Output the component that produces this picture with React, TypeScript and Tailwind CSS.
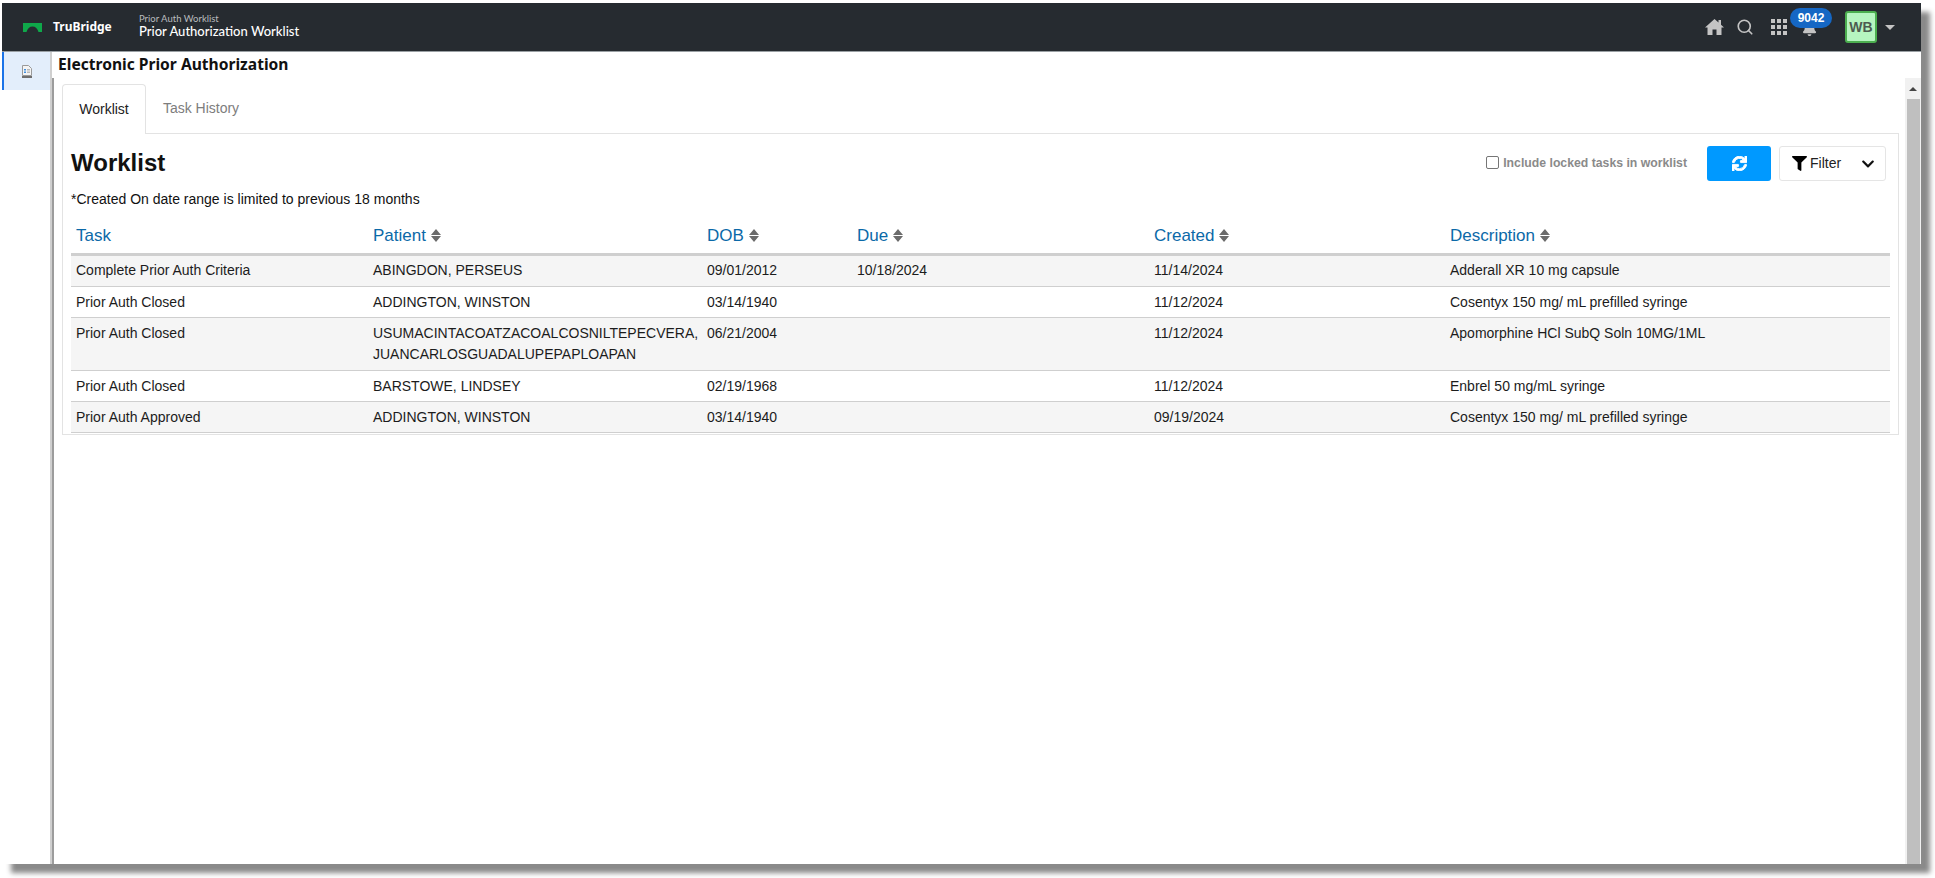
import { FaBell, FaChevronDown, FaFilter, FaSync } from 'react-icons/fa';
import { Search } from 'lucide-react';

const columns = [
  { label: 'Task', width: 'w-[297px]', sortable: false },
  { label: 'Patient', width: 'w-[334px]', sortable: true },
  { label: 'DOB', width: 'w-[150px]', sortable: true },
  { label: 'Due', width: 'w-[297px]', sortable: true },
  { label: 'Created', width: 'w-[296px]', sortable: true },
  { label: 'Description', width: 'w-[445px]', sortable: true },
];

const rows = [
  { task: 'Complete Prior Auth Criteria', patient: ['ABINGDON, PERSEUS'], dob: '09/01/2012', due: '10/18/2024', created: '11/14/2024', description: 'Adderall XR 10 mg capsule' },
  { task: 'Prior Auth Closed', patient: ['ADDINGTON, WINSTON'], dob: '03/14/1940', due: '', created: '11/12/2024', description: 'Cosentyx 150 mg/ mL prefilled syringe' },
  { task: 'Prior Auth Closed', patient: ['USUMACINTACOATZACOALCOSNILTEPECVERA,', 'JUANCARLOSGUADALUPEPAPLOAPAN'], dob: '06/21/2004', due: '', created: '11/12/2024', description: 'Apomorphine HCl SubQ Soln 10MG/1ML' },
  { task: 'Prior Auth Closed', patient: ['BARSTOWE, LINDSEY'], dob: '02/19/1968', due: '', created: '11/12/2024', description: 'Enbrel 50 mg/mL syringe' },
  { task: 'Prior Auth Approved', patient: ['ADDINGTON, WINSTON'], dob: '03/14/1940', due: '', created: '09/19/2024', description: 'Cosentyx 150 mg/ mL prefilled syringe' },
];

function SortIcon() {
  return (
    <svg viewBox="0 0 10 13" className="ml-[5px] inline-block h-[13px] w-[10px] align-[-1px]">
      <path d="M5 0 L10 6 H0 Z M0 7 H10 L5 13 Z" fill="#6b6b6b" />
    </svg>
  );
}

function Logo() {
  return (
    <svg viewBox="0 0 19 9" className="h-[9px] w-[19px]">
      <path d="M0 0 H19 V9 H15.5 C14.5 5.5 12.5 3.5 9.5 3.5 C6.5 3.5 4.5 5.5 3.5 9 H0 Z" fill="#0fa84a" />
    </svg>
  );
}

function HomeIcon() {
  return (
    <svg viewBox="0 0 19 16" className="h-[16px] w-[19px]" fill="#c4c4c4">
      <path d="M9.5 0 L13.5 3.6 V1 H16 V5.8 L19 8.5 H16.5 V16 H11.5 V10.5 H7.5 V16 H2.5 V8.5 H0 Z" />
    </svg>
  );
}

function GridIcon() {
  return (
    <svg viewBox="0 0 16 16" className="h-[16px] w-[16px]" fill="#c4c4c4">
      <rect x="0" y="0" width="4" height="4" />
      <rect x="6" y="0" width="4" height="4" />
      <rect x="12" y="0" width="4" height="4" />
      <rect x="0" y="6" width="4" height="4" />
      <rect x="6" y="6" width="4" height="4" />
      <rect x="12" y="6" width="4" height="4" />
      <rect x="0" y="12" width="4" height="4" />
      <rect x="6" y="12" width="4" height="4" />
      <rect x="12" y="12" width="4" height="4" />
    </svg>
  );
}

function FileIcon() {
  return (
    <svg viewBox="0 0 10 13" className="h-[13px] w-[10px]">
      <path d="M0.5 0.5 H6.5 L9.5 3.5 V10.5 H0.5 Z" fill="#f4f4f4" stroke="#9a9a9a" />
      <rect x="2" y="4" width="2" height="1.5" fill="#3f8fe0" />
      <rect x="5" y="4" width="3" height="1.5" fill="#b9b9b9" />
      <rect x="2" y="6.5" width="2" height="1.5" fill="#3f8fe0" />
      <rect x="5" y="6.5" width="3" height="1.5" fill="#b9b9b9" />
      <rect x="0" y="11" width="10" height="2" fill="#6e6e6e" />
    </svg>
  );
}

export default function App() {
  return (
    <div className="h-[878px] w-[1935px] overflow-hidden bg-white pl-[2px] pt-[3px]">
      <div className="flex h-[861px] w-[1919px] flex-col bg-white shadow-[9px_9px_5px_#8a8a8a] font-['Liberation_Sans',sans-serif]">
        {/* top bar */}
        <header className="flex h-[49px] shrink-0 items-center border-b border-[#9aa0a4] bg-[#262b30] font-['Lato',sans-serif]">
          <div className="ml-[21px] flex w-[116px] items-center gap-[11px]">
            <Logo />
            <span className="font-['Noto_Sans',sans-serif] text-[12px] font-bold text-white">TruBridge</span>
          </div>
          <div className="flex flex-col pb-[2px]">
            <span className="text-[9.5px] leading-[11px] text-[#b9bcbf]">Prior Auth Worklist</span>
            <span className="text-[13px] leading-[15px] font-medium text-white">Prior Authorization Worklist</span>
          </div>
          <div className="ml-auto flex items-center">
            <HomeIcon />
            <Search className="ml-[12px] h-[18px] w-[18px] text-[#c4c4c4]" strokeWidth={2.2} />
            <div className="ml-[17px]"><GridIcon /></div>
            <div className="relative ml-[3px] h-[36px] w-[42px]">
              <FaBell className="absolute left-[12px] top-[12px] h-[15px] w-[15px] text-[#c4c4c4]" />
              <span className="absolute left-0 top-[-1px] flex h-[20px] w-[42px] items-center justify-center rounded-full bg-[#1567c4] font-['Liberation_Sans',sans-serif] text-[12px] font-bold text-white">
                9042
              </span>
            </div>
            <div className="ml-[13px] flex h-[32px] w-[32px] items-center justify-center rounded-[3px] border-2 border-[#4caf50] bg-[#b6f5c0] font-['Liberation_Sans',sans-serif] text-[14px] font-bold text-[#4d5a50]">
              WB
            </div>
            <div className="ml-[8px] mr-[26px] h-0 w-0 border-x-[5px] border-t-[5px] border-x-transparent border-t-[#c4c4c4]" />
          </div>
        </header>

        <div className="flex min-h-0 flex-1">
          {/* side rail */}
          <aside className="w-[48px] shrink-0">
            <div className="flex h-[38px] items-center justify-center border-l-2 border-[#1a73e8] bg-[#e3eefb]">
              <FileIcon />
            </div>
          </aside>
          <div className="w-[2px] shrink-0 bg-[#cfcfcf]" />

          <main className="flex min-w-0 flex-1 flex-col">
            <h1 className="h-[26px] shrink-0 pl-[6px] font-['Noto_Sans',sans-serif] text-[15.6px] leading-[24px] font-bold text-[#111]">
              Electronic Prior Authorization
            </h1>
            <div className="flex min-h-0 flex-1 border-l-2 border-[#9c9c9c]">
              <div className="min-w-0 flex-1 pl-[8px] pr-[6px] pt-[6px]">
                {/* tabs */}
                <div className="relative z-10 flex h-[50px] items-stretch text-[14px]">
                  <div className="flex w-[84px] items-center justify-center rounded-t-[4px] border border-b-0 border-[#e3e3e3] bg-white text-[#222]">
                    Worklist
                  </div>
                  <div className="ml-[2px] flex w-[106px] items-center justify-center pb-[1px] text-[#7d7d7d]">Task History</div>
                </div>
                {/* panel */}
                <section className="-mt-px h-[302px] border border-[#e3e3e3] pl-[8px] pr-[4px] pt-[12px]">
                  <div className="flex h-[35px] items-center">
                    <h2 className="pb-[2px] text-[24px] font-bold text-[#111]">Worklist</h2>
                    <label className="ml-auto flex items-center text-[12.25px] font-bold text-[#8a8a8a]">
                      <span className="mb-[2px] mr-[4px] h-[13px] w-[13px] rounded-[2px] border border-[#767676] bg-white" />
                      Include locked tasks in worklist
                    </label>
                    <button className="ml-[20px] flex h-[35px] w-[64px] items-center justify-center rounded-[3px] bg-[#0099ff] text-white">
                      <FaSync className="h-[15px] w-[15px]" stroke="currentColor" strokeWidth={30} />
                    </button>
                    <div className="ml-[8px] mr-[8px] flex h-[35px] w-[107px] items-center rounded-[3px] border border-[#e5e5e5] pl-[12px] text-[14px] text-[#222]">
                      <FaFilter className="mr-[3px] h-[15px] w-[15px] text-black" />
                      Filter
                      <FaChevronDown className="ml-auto mr-[10px] h-[14px] w-[14px] text-[#111]" />
                    </div>
                  </div>
                  <p className="mt-[9px] text-[14px] leading-[18px] text-[#111]">*Created On date range is limited to previous 18 months</p>
                  <table className="mt-[10px] w-[1819px] table-fixed border-collapse text-[14px] leading-[21px] text-[#1c1c1c]">
                    <thead>
                      <tr className="border-b-[3px] border-[#cfcfcf]">
                        {columns.map((c) => (
                          <th key={c.label} className={`${c.width} h-[36px] px-[5px] text-left text-[17px] font-normal text-[#0b69a8]`}>
                            {c.label}
                            {c.sortable && <SortIcon />}
                          </th>
                        ))}
                      </tr>
                    </thead>
                    <tbody>
                      {rows.map((r, i) => {
                        // first row sits a pixel higher, the two line row is a pixel taller
                        const pad = i === 0 ? 'pt-[4px] pb-[5px]' : r.patient.length > 1 ? 'pt-[5px] pb-[5px]' : 'pt-[5px] pb-[4px]';
                        return (
                          <tr key={i} className={`border-b border-[#cfcfcf] align-top ${i % 2 === 0 ? 'bg-[#f5f5f5]' : 'bg-white'}`}>
                            <td className={`px-[5px] ${pad}`}>{r.task}</td>
                            <td className={`px-[5px] ${pad}`}>
                              {r.patient.map((p) => (
                                <div key={p}>{p}</div>
                              ))}
                            </td>
                            <td className={`px-[5px] ${pad}`}>{r.dob}</td>
                            <td className={`px-[5px] ${pad}`}>{r.due}</td>
                            <td className={`px-[5px] ${pad}`}>{r.created}</td>
                            <td className={`px-[5px] ${pad}`}>{r.description}</td>
                          </tr>
                        );
                      })}
                    </tbody>
                  </table>
                </section>
              </div>
              {/* scrollbar */}
              <div className="flex w-[16px] shrink-0 flex-col bg-[#f1f1f1]">
                <div className="flex h-[21px] items-center justify-center">
                  <div className="h-0 w-0 border-x-[4px] border-b-[4px] border-x-transparent border-b-[#444]" />
                </div>
                <div className="ml-[2px] w-[13px] flex-1 bg-[#bfbfbf]" />
              </div>
            </div>
          </main>
        </div>
      </div>
    </div>
  );
}
